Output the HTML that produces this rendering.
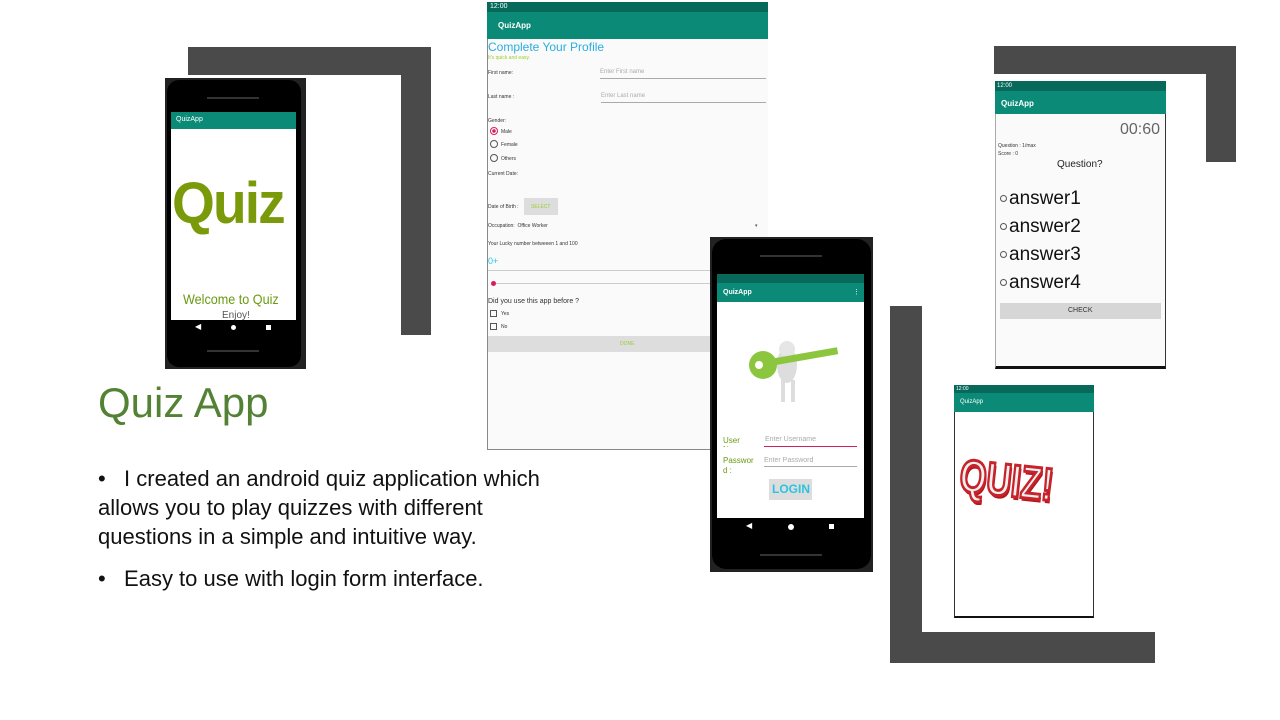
<!DOCTYPE html>
<html><head><meta charset="utf-8"><style>
*{margin:0;padding:0;box-sizing:border-box}
body{width:1280px;height:720px;background:#fff;position:relative;overflow:hidden;font-family:"Liberation Sans",sans-serif}
.a{position:absolute}
.dk{background:#4a4a4a;position:absolute}
.teal{background:#0b8a78}
.st{background:#06695a}
.t{position:absolute;white-space:nowrap}
.ans{position:absolute;left:1000px;font-size:19px;color:#111;line-height:20px;white-space:nowrap}
.ans i{display:inline-block;width:7px;height:7px;border:1px solid #555;border-radius:50%;margin-right:2px;vertical-align:middle}
</style></head><body>
<!-- brackets -->
<div class="dk" style="left:188px;top:47px;width:243px;height:28px"></div>
<div class="dk" style="left:401px;top:47px;width:30px;height:288px"></div>
<div class="dk" style="left:994px;top:46px;width:242px;height:28px"></div>
<div class="dk" style="left:1206px;top:46px;width:30px;height:116px"></div>
<div class="dk" style="left:890px;top:306px;width:32px;height:357px"></div>
<div class="dk" style="left:890px;top:632px;width:265px;height:31px"></div>

<!-- phone 1 -->
<div class="a" style="left:165px;top:78px;width:141px;height:291px;background:#222"></div>
<div class="a" style="left:167px;top:80px;width:134px;height:287px;background:#000;border-radius:12px"></div>
<div class="a" style="left:207px;top:97px;width:52px;height:2px;background:#333"></div>
<div class="a" style="left:171px;top:112px;width:125px;height:208px;background:#fff"></div>
<div class="a teal" style="left:171px;top:112px;width:125px;height:17px"></div>
<div class="t" style="left:176px;top:116px;font-size:7px;color:#fff">QuizApp</div>
<div class="t" style="left:172px;top:170px;font-size:58px;font-weight:bold;color:#7a9a0a;letter-spacing:-2px;transform:scaleX(0.95);transform-origin:left">Quiz</div>
<div class="t" style="left:183px;top:291px;font-size:14px;color:#6a9a12;transform:scaleX(0.9);transform-origin:left">Welcome to Quiz</div>
<div class="t" style="left:222px;top:310px;font-size:10px;color:#555">Enjoy!</div>
<div class="t" style="left:195px;top:322px;font-size:8px;color:#fff">◀</div>
<div class="a" style="left:231px;top:325px;width:5px;height:5px;border-radius:50%;background:#fff"></div>
<div class="a" style="left:266px;top:325px;width:5px;height:5px;background:#fff"></div>
<div class="a" style="left:207px;top:350px;width:52px;height:2px;background:#333"></div>

<!-- profile screen -->
<div class="a" style="left:487px;top:2px;width:281px;height:448px;background:#fafafa;border-left:1px solid #888;border-bottom:1px solid #888"></div>
<div class="a st" style="left:487px;top:2px;width:281px;height:10px"></div>
<div class="t" style="left:490px;top:3px;font-size:7px;color:#fff">12:00</div>
<div class="a teal" style="left:487px;top:12px;width:281px;height:27px"></div>
<div class="t" style="left:498px;top:21px;font-size:8px;color:#fff;font-weight:bold">QuizApp</div>
<div class="t" style="left:488px;top:40px;font-size:12px;color:#29aee0">Complete Your Profile</div>
<div class="t" style="left:488px;top:55px;font-size:5px;color:#9acd32">It's quick and easy.</div>
<div class="t" style="left:488px;top:70px;font-size:5px;color:#333">First name:</div>
<div class="t" style="left:600px;top:69px;font-size:6px;color:#aaa">Enter First name</div>
<div class="a" style="left:600px;top:78px;width:166px;height:1px;background:#aaa"></div>
<div class="t" style="left:488px;top:94px;font-size:5px;color:#333">Last name :</div>
<div class="t" style="left:601px;top:93px;font-size:6px;color:#aaa">Enter Last name</div>
<div class="a" style="left:601px;top:102px;width:165px;height:1px;background:#aaa"></div>
<div class="t" style="left:488px;top:118px;font-size:5px;color:#333">Gender:</div>
<div class="a" style="left:490px;top:127px;width:8px;height:8px;border-radius:50%;border:1px solid #d81b60;background:radial-gradient(#d81b60 40%,#fff 45%)"></div>
<div class="t" style="left:501px;top:129px;font-size:5px;color:#333">Male</div>
<div class="a" style="left:490px;top:140px;width:8px;height:8px;border-radius:50%;border:1px solid #555"></div>
<div class="t" style="left:501px;top:142px;font-size:5px;color:#333">Female</div>
<div class="a" style="left:490px;top:154px;width:8px;height:8px;border-radius:50%;border:1px solid #555"></div>
<div class="t" style="left:501px;top:156px;font-size:5px;color:#333">Others</div>
<div class="t" style="left:488px;top:171px;font-size:5px;color:#333">Current Date:</div>
<div class="t" style="left:488px;top:204px;font-size:5px;color:#333">Date of Birth :</div>
<div class="a" style="left:524px;top:198px;width:34px;height:17px;background:#ddd"></div>
<div class="t" style="left:531px;top:204px;font-size:5px;color:#9acd32">SELECT</div>
<div class="t" style="left:488px;top:223px;font-size:5px;color:#333">Occupation:&nbsp; Office Worker</div>
<div class="t" style="left:755px;top:223px;font-size:5px;color:#555">▾</div>
<div class="t" style="left:488px;top:241px;font-size:5px;color:#333">Your Lucky number betweeen 1 and 100</div>
<div class="t" style="left:488px;top:256px;font-size:9px;color:#29c5e0">0+</div>
<div class="a" style="left:488px;top:270px;width:222px;height:1px;background:#ccc"></div>
<div class="a" style="left:491px;top:281px;width:5px;height:5px;border-radius:50%;background:#d81b60"></div>
<div class="a" style="left:496px;top:283px;width:214px;height:1px;background:#ccc"></div>
<div class="t" style="left:488px;top:298px;font-size:7px;color:#333">Did you use this app before ?</div>
<div class="a" style="left:490px;top:310px;width:7px;height:7px;border:1px solid #555"></div>
<div class="t" style="left:501px;top:311px;font-size:5px;color:#333">Yes</div>
<div class="a" style="left:490px;top:323px;width:7px;height:7px;border:1px solid #555"></div>
<div class="t" style="left:501px;top:324px;font-size:5px;color:#333">No</div>
<div class="a" style="left:488px;top:336px;width:222px;height:16px;background:#ddd"></div>
<div class="t" style="left:620px;top:341px;font-size:5px;color:#9acd32">DONE</div>

<!-- phone 2 -->
<div class="a" style="left:710px;top:237px;width:163px;height:335px;background:#222"></div>
<div class="a" style="left:712px;top:239px;width:159px;height:330px;background:#000;border-radius:14px"></div>
<div class="a" style="left:760px;top:255px;width:62px;height:2px;background:#333"></div>
<div class="a" style="left:717px;top:274px;width:147px;height:244px;background:#fff"></div>
<div class="a st" style="left:717px;top:274px;width:147px;height:9px"></div>
<div class="a teal" style="left:717px;top:283px;width:147px;height:19px"></div>
<div class="t" style="left:723px;top:289px;font-size:7px;color:#fff;font-weight:bold">QuizApp</div>
<div class="t" style="left:853px;top:288px;font-size:7px;color:#fff">⋮</div>
<svg class="a" style="left:745px;top:335px" width="95" height="75" viewBox="0 0 95 75">
<ellipse cx="42" cy="30" rx="10" ry="18" fill="#ddd"/><circle cx="42" cy="14" r="8" fill="#e6e6e6"/>
<rect x="36" y="45" width="4" height="22" fill="#ddd"/><rect x="46" y="45" width="4" height="22" fill="#ddd"/>
<circle cx="18" cy="30" r="14" fill="#8cc63f"/><rect x="25" y="24" width="68" height="7" fill="#8cc63f" transform="rotate(-10 25 24)"/>
<circle cx="14" cy="30" r="4" fill="#fff"/></svg>
<div class="t" style="left:723px;top:436px;font-size:8px;color:#6a9a12;line-height:9px">User<br>Name:</div>
<div class="a" style="left:717px;top:447px;width:40px;height:6px;background:#fff"></div>
<div class="t" style="left:765px;top:436px;font-size:7px;color:#aaa">Enter Username</div>
<div class="a" style="left:764px;top:446px;width:93px;height:1px;background:#d81b60"></div>
<div class="t" style="left:723px;top:456px;font-size:8px;color:#6a9a12;line-height:10px">Passwor<br>d :</div>
<div class="t" style="left:764px;top:457px;font-size:7px;color:#aaa">Enter Password</div>
<div class="a" style="left:764px;top:466px;width:93px;height:1px;background:#aaa"></div>
<div class="a" style="left:769px;top:479px;width:43px;height:21px;background:#ddd"></div>
<div class="t" style="left:772px;top:482px;font-size:12px;color:#29c5e0;font-weight:bold">LOGIN</div>
<div class="t" style="left:746px;top:521px;font-size:8px;color:#fff">◀</div>
<div class="a" style="left:788px;top:524px;width:6px;height:6px;border-radius:50%;background:#fff"></div>
<div class="a" style="left:829px;top:524px;width:5px;height:5px;background:#fff"></div>
<div class="a" style="left:760px;top:554px;width:62px;height:2px;background:#333"></div>

<!-- quiz screen -->
<div class="a" style="left:995px;top:81px;width:171px;height:288px;background:#fafafa;border-left:1px solid #aaa;border-right:1px solid #333;border-bottom:3px solid #111"></div>
<div class="a st" style="left:995px;top:81px;width:171px;height:10px"></div>
<div class="t" style="left:997px;top:83px;font-size:6px;color:#fff">12:00</div>
<div class="a teal" style="left:995px;top:91px;width:171px;height:23px"></div>
<div class="t" style="left:1001px;top:99px;font-size:8px;color:#fff;font-weight:bold">QuizApp</div>
<div class="t" style="left:1120px;top:121px;font-size:16px;color:#666">00:60</div>
<div class="t" style="left:998px;top:142px;font-size:5px;color:#333;line-height:8px">Question : 1/max<br>Score : 0</div>
<div class="t" style="left:1057px;top:159px;font-size:10px;color:#222">Question?</div>
<div class="ans" style="top:189px"><i></i>answer1</div>
<div class="ans" style="top:217px"><i></i>answer2</div>
<div class="ans" style="top:245px"><i></i>answer3</div>
<div class="ans" style="top:273px"><i></i>answer4</div>
<div class="a" style="left:1000px;top:303px;width:161px;height:16px;background:#d6d6d6"></div>
<div class="t" style="left:1068px;top:307px;font-size:7px;color:#333">CHECK</div>

<!-- Quiz! screen -->
<div class="a" style="left:954px;top:385px;width:140px;height:233px;background:#fff;border:1px solid #333;border-bottom:2px solid #111"></div>
<div class="a st" style="left:954px;top:385px;width:140px;height:8px"></div>
<div class="t" style="left:956px;top:386px;font-size:5px;color:#fff">12:00</div>
<div class="a teal" style="left:954px;top:393px;width:140px;height:19px"></div>
<div class="t" style="left:960px;top:399px;font-size:6px;color:#fff">QuizApp</div>
<div class="t" style="left:960px;top:448px;font-size:46px;font-weight:bold;color:#f0f0f0;-webkit-text-stroke:3px #c8222a;transform:rotate(6deg) scaleX(0.75);transform-origin:left;text-shadow:2px 3px 0 #b01820">QUIZ!</div>

<!-- text -->
<div class="t" style="left:98px;top:379px;font-size:42px;color:#548235">Quiz App</div>
<div class="a" style="left:98px;top:464px;width:560px;font-size:22px;line-height:29px;color:#111;white-space:nowrap">
<div>•&nbsp;&nbsp; I created an android quiz application which<br>allows you to play quizzes with different<br>questions in a simple and intuitive way.</div>
<div style="margin-top:13px">•&nbsp;&nbsp; Easy to use with login form interface.</div>
</div>
</body></html>
